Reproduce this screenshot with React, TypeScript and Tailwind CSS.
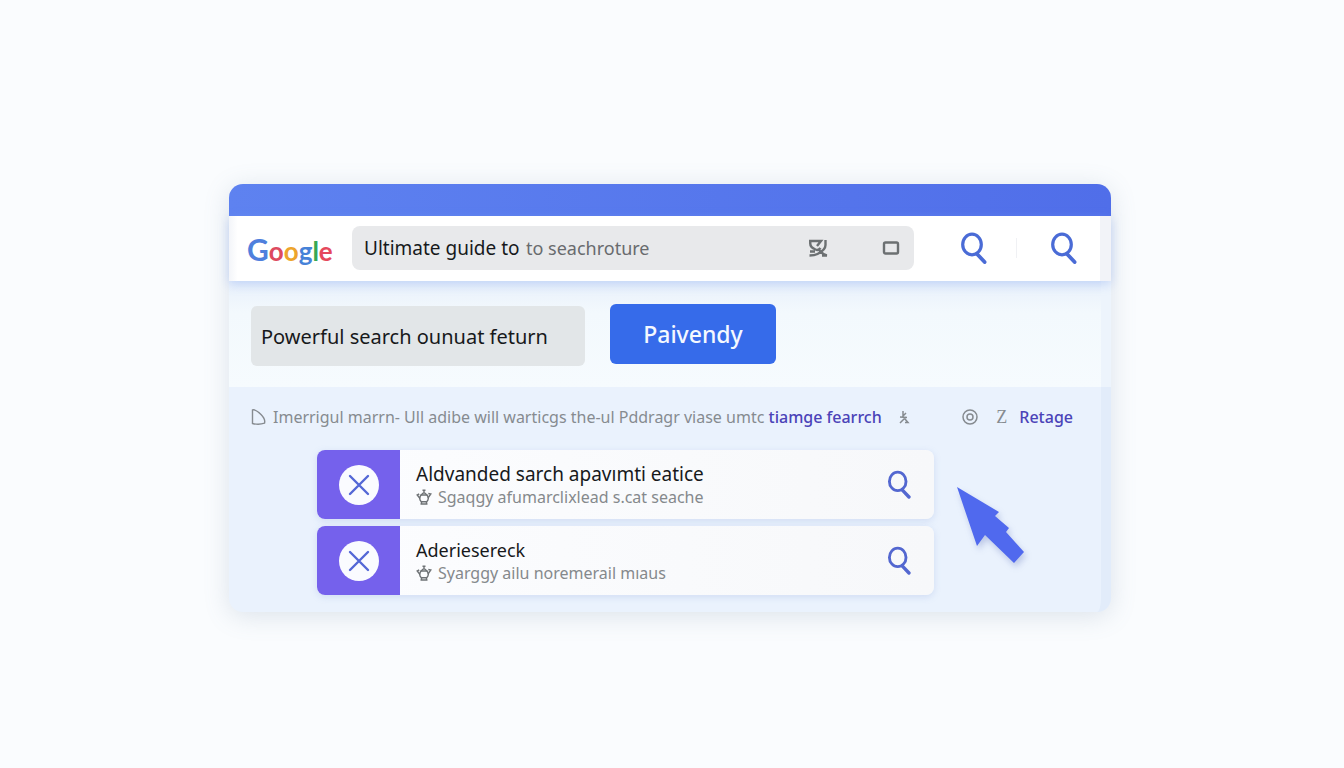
import React, { useState } from 'react';

const SearchIcon = ({ className }: { className: string }) => (
  <svg viewBox="0 0 28 32" className={className} fill="none" stroke="currentColor" aria-hidden="true">
    <ellipse cx="12" cy="12.5" rx="9.3" ry="10.3" strokeWidth="3.2" />
    <path d="M17 22 24.6 30" strokeWidth="3.8" strokeLinecap="round" />
  </svg>
);

const PotIcon = () => (
  <svg viewBox="0 0 16 16" className="h-4 w-4 shrink-0 text-[#6f7376]" fill="none" stroke="currentColor" strokeWidth="1.4" aria-hidden="true">
    <path d="M5 6C3.3 8.400 3.500 11 5.300 12.700h5.400c1.800-1.700 2-4.300.3-6.700Z" />
    <path d="M5 6l3-2.500L11 6M8 3.500V1M6.500 1.200h3M4 9.500 1.200 6l2-1M12 9l2.800-4-2.500-.5" />
    <path d="M4.500 15h7M5.500 12.500V15M10.500 12.500V15" />
  </svg>
);

const Logo = () => (
  <div className="mt-1 flex w-[83px] shrink-0 items-baseline font-['Lato',sans-serif] text-[26px] leading-8 font-bold" aria-label="Google">
    <span className="text-3xl leading-8 text-[#4f80dd]">G</span>
    <span className="text-[#dd4a60]">o</span>
    <span className="text-[#eda42c]">o</span>
    <span className="text-[#4682d8]">g</span>
    <span className="text-[#36a854]">l</span>
    <span className="text-[#e5485c]">e</span>
  </div>
);

const results = [
  { title: 'Aldvanded sarch apavımti eatice', detail: 'Sgaqgy afumarclixlead s.cat seache', titleClass: 'text-[19px]' },
  { title: 'Aderiesereck', detail: 'Syarggy ailu noremerail mıaus', titleClass: 'text-lg' },
];

const App = () => {
  const [query, setQuery] = useState('Ultimate guide to');
  const [filter, setFilter] = useState('Powerful search ounuat feturn');

  return (
    <div className="min-h-screen bg-[#fafcfe] pt-[184px] pr-7 pb-12 pl-6 font-['Noto_Sans',sans-serif]">
      <main className="relative mx-auto w-full max-w-[882px] rounded-[14px] bg-[#eaf2fd] shadow-[0_4px_26px_rgba(100,125,155,0.2)]">
        <div className="h-8 rounded-t-[14px] bg-linear-to-r from-[#5e82f0] to-[#506ee9]" />

        <header className="relative flex items-center border-r-[11px] border-[#f2f3f8] bg-linear-to-r from-[#f3f5f9] to-white to-1% pt-2.5 pr-[22px] pb-[11px] pl-[18px] shadow-[0_3px_10px_rgba(130,165,240,0.4)]">
          <Logo />
          <div className="ml-[22px] flex h-11 min-w-0 flex-1 items-center rounded-lg bg-[#e8e9eb] px-3">
            <input
              type="text"
              aria-label="Search"
              value={query}
              onChange={(e) => setQuery(e.target.value)}
              className="w-[162px] bg-transparent text-[19px] text-[#17191b] outline-none"
            />
            <span className="text-lg whitespace-nowrap text-[#686b6e]">to seachroture</span>
            <button type="button" aria-label="Translate" className="ml-auto text-[#6c7072]">
              <svg viewBox="0 0 20 18" className="h-[18px] w-5" fill="none" stroke="currentColor" strokeWidth="2.4">
                <path d="M1 2h12L9 7M2.500 2c-1 4 1 7 5 8.500 2 .8 4 0 5-1.500M17.500 1v5c0 4-4 7-8 9-2 1-5 1.500-8 1.500M2 12.500h5M11 11c2 2 4 5 8 5.500h-5" />
              </svg>
            </button>
            <button type="button" aria-label="Window" className="mr-0.5 ml-[54px] text-[#6c7072]">
              <svg viewBox="0 0 18 16" className="h-4 w-[18px]" fill="none" stroke="currentColor" strokeWidth="2.4">
                <rect x="2" y="2.500" width="14" height="11" rx="1.500" />
              </svg>
            </button>
          </div>
          <button type="button" aria-label="Run search" className="ml-[46px] text-[#4a6bd6]">
            <SearchIcon className="h-8 w-7" />
          </button>
          <div className="ml-7 h-5 w-px bg-[#f0f1f4]" />
          <button type="button" aria-label="Search again" className="ml-[33px] text-[#4a6bd6]">
            <SearchIcon className="h-8 w-7" />
          </button>
        </header>

        <section className="flex h-[106px] items-start border-r-[10px] border-[#edf4fc] bg-linear-to-b from-[#e8f0fb] via-[#f3f9fd] via-30% to-[#f6fbfe] pt-[23px] pl-[22px]">
          <input
            type="text"
            aria-label="Filter"
            value={filter}
            onChange={(e) => setFilter(e.target.value)}
            className="mt-0.5 h-[60px] w-[334px] rounded-md bg-[#e2e6e8] px-2.5 text-xl text-[#17191b] outline-none"
          />
          <button type="button" className="ml-[25px] h-[60px] w-[166px] rounded-md bg-[#366bea] text-[23px] font-medium text-[#f4f8ff]">
            Paivendy
          </button>
        </section>

        <section className="rounded-b-[14px] border-r-[10px] border-[#e2ecfa] pt-[18px] pb-[17px] pl-[22px]">
          <div className="flex h-6 items-center text-base whitespace-nowrap text-[#868b90]">
            <svg viewBox="0 0 16 18" className="mr-1.5 h-[18px] w-4 shrink-0" fill="none" stroke="currentColor" strokeWidth="1.400" aria-hidden="true">
              <path d="M1.500 2v13.500c3 .8 9 .7 12-.3.900-3-.8-6-3.500-8.700C7 3.500 4 1 1.500 2Z" />
            </svg>
            <p>
              Imerrigul marrn- Ull adibe will warticgs the-ul Pddragr viase umtc{' '}
              <a href="#" className="font-medium text-[#4b43b8]">tiamge fearrch</a>
            </p>
            <svg viewBox="0 0 12 16" className="ml-4 h-4 w-3 shrink-0" fill="none" stroke="currentColor" strokeWidth="1.500" aria-hidden="true">
              <path d="M5 2v5l3-3M2 8l7 .5M8 8 2 14M7 10l3 3.500H7" />
            </svg>
            <svg viewBox="0 0 16 16" className="ml-auto h-4 w-4 shrink-0" fill="none" stroke="currentColor" strokeWidth="1.500" aria-hidden="true">
              <circle cx="8" cy="8" r="7" />
              <circle cx="8" cy="8" r="3" />
            </svg>
            <span className="ml-[18px] font-['Liberation_Serif',serif] text-lg">Z</span>
            <a href="#" className="mr-7 ml-3 font-medium text-[#4b43b8]">Retage</a>
          </div>

          <ul className="mt-[21px] mr-[167px] ml-[66px] flex flex-col gap-[7px]">
            {results.map((result) => (
              <li key={result.title} className="flex h-[69px] overflow-hidden rounded-lg bg-linear-to-r from-[#fcfdff] to-[#f7f8fa] shadow-[0_2px_7px_rgba(120,145,210,0.22)]">
                <div className="flex w-[83px] shrink-0 items-center justify-center bg-[#7561ec]">
                  <button type="button" aria-label="Dismiss" className="flex h-10 w-10 items-center justify-center rounded-full bg-[#fafbff] text-[#5367d6]">
                    <svg viewBox="0 0 22 22" className="h-[22px] w-[22px]" fill="none" stroke="currentColor" strokeWidth="2.400" strokeLinecap="round">
                      <path d="M2 2 20 20M20 2 2 20" />
                    </svg>
                  </button>
                </div>
                <div className="min-w-0 flex-1 pt-3 pl-4">
                  <h2 className={`${result.titleClass} leading-6 whitespace-nowrap text-[#17191b]`}>{result.title}</h2>
                  <p className="flex items-center gap-1.5 text-base leading-[22px] whitespace-nowrap text-[#85898c]">
                    <PotIcon />
                    {result.detail}
                  </p>
                </div>
                <button type="button" aria-label="Search this result" className="mr-[22px] text-[#5367d0]">
                  <SearchIcon className="h-[29px] w-[25px]" />
                </button>
              </li>
            ))}
          </ul>
        </section>

        <svg
          viewBox="0 0 67 77"
          className="absolute top-[303px] right-[87px] h-[77px] w-[67px] drop-shadow-[2px_4px_3px_rgba(80,100,180,0.3)]"
          fill="#5069ee"
          aria-hidden="true"
        >
          <path d="M0 0 42 25 38 29 52 41 49 45 67 65 57 76 28 48 20 59Z" />
        </svg>
      </main>
    </div>
  );
};

export default App;
